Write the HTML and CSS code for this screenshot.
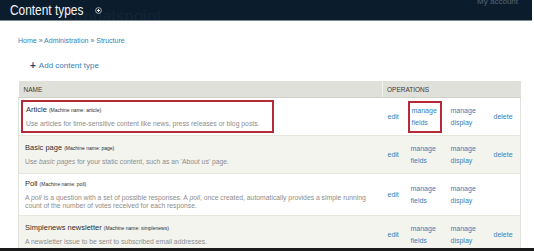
FILE: index.html
```html
<!DOCTYPE html>
<html>
<head>
<meta charset="utf-8">
<link rel="stylesheet" href="styles.css">
</head>
<body>
<div class="page">
  <header class="topbar">
    <div class="title-wrap">
      <span class="watermark">tutorialspoint</span>
      <h1 class="title">Content types</h1>
      <span class="shortcut"><svg width="7" height="7" viewBox="0 0 8 8"><circle cx="4" cy="4" r="3.3" fill="none" stroke="#c9d0d6" stroke-width="0.9"/><path d="M4 2.3v3.4M2.3 4h3.4" stroke="#ffffff" stroke-width="1.1"/></svg></span>
    </div>
    <div class="account">My account</div>
  </header>
  <main class="content">
    <nav class="breadcrumb"><a>Home</a> » <a>Administration</a> » <a>Structure</a></nav>
    <div class="actions"><span class="plus">+</span><a>Add content type</a></div>
    <table class="types">
      <colgroup>
        <col class="c-name"><col class="c-edit"><col class="c-fields"><col class="c-display"><col class="c-delete">
      </colgroup>
      <thead>
        <tr><th class="col-name">NAME</th><th class="col-ops" colspan="4">OPERATIONS</th></tr>
      </thead>
      <tbody>
        <tr class="odd r1">
          <td class="name-cell"><div class="highlight"><div class="nm">Article <small>(Machine name: article)</small></div><div class="desc">Use articles for time-sensitive content like news, press releases or blog posts.</div></div></td>
          <td class="op op-edit"><a>edit</a></td>
          <td class="op op-fields"><div class="boxed"><a>manage<br>fields</a></div></td>
          <td class="op op-display"><a>manage<br>display</a></td>
          <td class="op op-delete"><a>delete</a></td>
        </tr>
        <tr class="even r2">
          <td class="name-cell"><div class="nm">Basic page <small>(Machine name: page)</small></div><div class="desc">Use <em>basic pages</em> for your static content, such as an 'About us' page.</div></td>
          <td class="op op-edit"><a>edit</a></td>
          <td class="op op-fields"><a>manage<br>fields</a></td>
          <td class="op op-display"><a>manage<br>display</a></td>
          <td class="op op-delete"><a>delete</a></td>
        </tr>
        <tr class="odd r3">
          <td class="name-cell"><div class="nm">Poll <small>(Machine name: poll)</small></div><div class="desc">A <em>poll</em> is a question with a set of possible responses. A <em>poll</em>, once created, automatically provides a simple running count of the number of votes received for each response.</div></td>
          <td class="op op-edit"><a>edit</a></td>
          <td class="op op-fields"><a>manage<br>fields</a></td>
          <td class="op op-display"><a>manage<br>display</a></td>
          <td class="op op-delete"></td>
        </tr>
        <tr class="even r4">
          <td class="name-cell"><div class="nm">Simplenews newsletter <small>(Machine name: simplenews)</small></div><div class="desc">A newsletter issue to be sent to subscribed email addresses.</div></td>
          <td class="op op-edit"><a>edit</a></td>
          <td class="op op-fields"><a>manage<br>fields</a></td>
          <td class="op op-display"><a>manage<br>display</a></td>
          <td class="op op-delete"><a>delete</a></td>
        </tr>
      </tbody>
    </table>
  </main>
  <div class="bottombar"></div>
</div>
</body>
</html>
```

FILE: styles.css
```css
html, body {
  margin: 0;
  padding: 0;
  background: #ffffff;
  overflow: hidden;
}
.page {
  width: 534px;
  height: 251px;
  display: flex;
  flex-direction: column;
  font-family: "Liberation Sans", Arial, sans-serif;
  overflow: hidden;
}
.topbar {
  height: 20px;
  flex: none;
  background: #0b1d2d;
  border-bottom: 1px solid #7f8a93;
  display: flex;
  justify-content: space-between;
  align-items: flex-start;
  margin-right: 2px;
  overflow: hidden;
}
.title-wrap {
  display: flex;
  align-items: center;
  height: 20px;
  padding-left: 10px;
  position: relative;
}
.title {
  margin: 0 -16px 0 0;
  font-weight: normal;
  font-size: 14.5px;
  color: #f4f6f8;
  line-height: 20px;
  display: inline-block;
  transform: scaleX(0.82);
  transform-origin: left center;
  position: relative;
}
.shortcut {
  display: flex;
  margin-left: 12px;
  margin-top: 1px;
  position: relative;
}
.watermark {
  position: absolute;
  left: 64px;
  top: 8px;
  font-size: 16px;
  color: #132435;
  letter-spacing: 0.5px;
}
.account {
  font-size: 8px;
  line-height: 10px;
  color: #56636e;
  margin-top: -3px;
  margin-right: 14px;
}
.content {
  flex: 1;
  padding: 0 14px 0 18px;
  overflow: hidden;
}
.breadcrumb {
  font-size: 7px;
  line-height: 10px;
  color: #6a6a6a;
  margin-top: 15px;
}
.breadcrumb a, .actions a, .op a {
  color: #3d80b6;
  text-decoration: none;
}
.actions {
  display: flex;
  align-items: center;
  margin-top: 15px;
  padding-left: 12px;
  font-size: 8px;
  line-height: 10px;
}
.plus {
  color: #1f4f7a;
  font-weight: bold;
  font-size: 10px;
  margin-right: 3px;
}
.types {
  margin-top: 10px;
  width: 502px;
  table-layout: fixed;
  border-collapse: collapse;
  font-size: 7px;
}
.c-name { width: 364px; }
.c-edit { width: 24px; }
.c-fields { width: 40px; }
.c-display { width: 41px; }
.c-delete { width: 33px; }
.types th {
  background: #dfe0d9;
  color: #3a3a3a;
  font-weight: normal;
  text-align: left;
  font-size: 6.5px;
  height: 16px;
  padding: 0 5px;
  border-bottom: 1px solid #d0d0c8;
}
.types th.col-ops {
  border-left: 1px solid #f2f2ee;
  padding-left: 4px;
}
.types td {
  border-bottom: 1px solid #e6e6df;
  vertical-align: middle;
}
.types tr.odd td { background: #ffffff; }
.types tr.even td { background: #f4f4ef; }
.types td:first-child { border-left: 1px solid #e2e2dc; }
.types td:last-child { border-right: 1px solid #e2e2dc; }
.r1 td { height: 37px; }
.r2 td { height: 37px; }
.r3 td { height: 41px; }
.r4 td { height: 37px; }
.name-cell {
  padding: 0 6px;
}
.r1 .name-cell { padding: 0 2px; }
.highlight {
  border: 2px solid #b52a36;
  padding: 3px 3px 3px 3px;
  width: 243px;
}
.nm {
  color: #2e2e2e;
  font-size: 7.5px;
  line-height: 10px;
}
.nm small {
  font-size: 5px;
}
.desc {
  color: #8d8d8d;
  font-size: 6.8px;
  line-height: 8.5px;
  margin-top: 5px;
}
.highlight .desc {
  white-space: nowrap;
}
.op {
  color: #3d80b6;
  font-size: 7px;
  line-height: 12px;
  padding: 0 0 0 4px;
}
.op-edit { padding-left: 5px; }
.op-delete { padding-left: 6px; }
.boxed {
  display: inline-block;
  border: 2px solid #b52a36;
  padding: 2px 3px 2px 2px;
  margin-left: -3px;
}
.bottombar {
  height: 3px;
  flex: none;
  background: #1a1a1a;
}
```
